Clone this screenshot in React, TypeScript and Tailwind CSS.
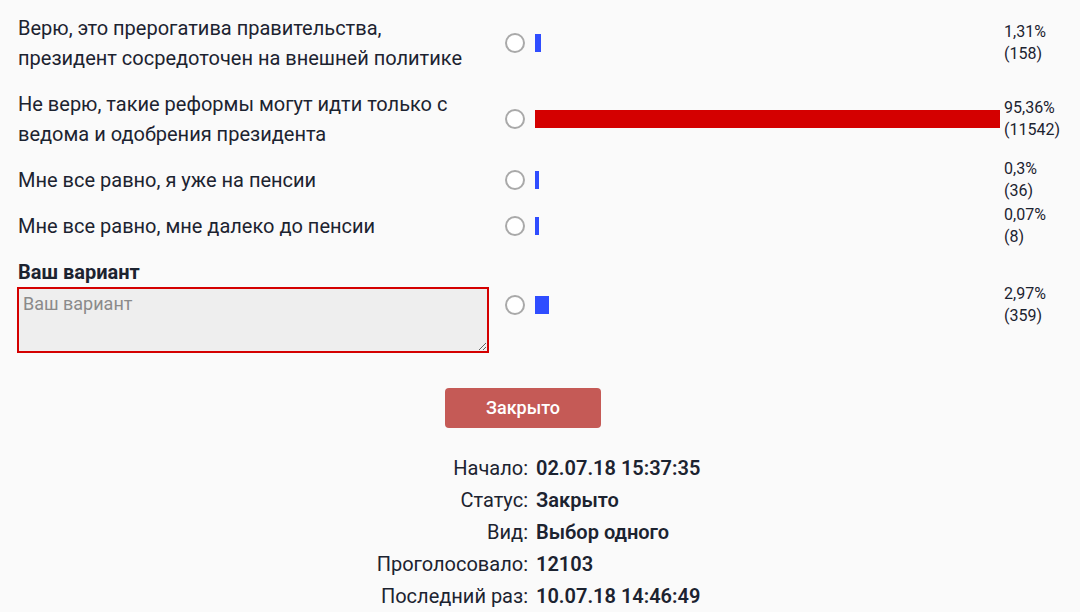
import React from "react";

type Row = { text: React.ReactNode; pct: string; count: string; bar: number; red?: boolean };

const rows: Row[] = [
  { text: <>Верю, это прерогатива правительства,<br />президент сосредоточен на внешней политике</>, pct: "1,31%", count: "(158)", bar: 6 },
  { text: <>Не верю, такие реформы могут идти только с<br />ведома и одобрения президента</>, pct: "95,36%", count: "(11542)", bar: 465, red: true },
  { text: "Мне все равно, я уже на пенсии", pct: "0,3%", count: "(36)", bar: 4 },
  { text: "Мне все равно, мне далеко до пенсии", pct: "0,07%", count: "(8)", bar: 4 },
];

function Radio() {
  return <div className="w-[20px] h-[20px] rounded-full border-2 border-[#a9a9a9] bg-white" />;
}

function Pct({ pct, count }: { pct: string; count: string }) {
  return (
    <div className="w-[76px] pl-[4px] text-[16px] leading-[22px] text-[#1c2330]">
      <div>{pct}</div>
      <div>{count}</div>
    </div>
  );
}

function Bar({ w, red }: { w: number; red?: boolean }) {
  return (
    <div className="w-[465px] flex">
      <div className={red ? "h-[18px] bg-[#d40000]" : "h-[18px] bg-[#2f4dff]"} style={{ width: w }} />
    </div>
  );
}

export default function App() {
  return (
    <div
      className="w-[1080px] h-[612px] bg-[#fafafa] text-[#1c2330] overflow-hidden"
      style={{ fontFamily: "Roboto, 'Noto Sans', sans-serif" }}
    >
      <div className="pl-[18px] pt-[4.5px]">
        {rows.map((r, i) => (
          <div key={i} className="flex items-center">
            <div className="w-[472px] py-[8px] text-[20px] leading-[30px]">{r.text}</div>
            <div className="w-[45px] flex justify-center pl-[4px]"><Radio /></div>
            <Bar w={r.bar} red={r.red} />
            <Pct pct={r.pct} count={r.count} />
          </div>
        ))}
        <div className="flex items-center">
          <div className="w-[472px] py-[8px]">
            <div className="text-[20px] leading-[30px] font-bold">Ваш вариант</div>
            <textarea
              placeholder="Ваш вариант"
              className="block w-[472px] h-[66px] -ml-[1px] bg-[#eeeeee] border-2 border-[#d40000] px-[4px] py-[2px] text-[18px] leading-[26px] placeholder:text-[#8a8a8a] outline-none"
              style={{ fontFamily: "Roboto, 'Noto Sans', sans-serif" }}
            />
          </div>
          <div className="w-[45px] flex justify-center pl-[4px]"><Radio /></div>
          <Bar w={14} />
          <Pct pct="2,97%" count="(359)" />
        </div>
        <div className="w-[1010px] flex justify-center mt-[27px]">
          <button className="w-[156px] h-[40px] rounded-[4px] bg-[#c55a56] text-white text-[18px] font-medium">Закрыто</button>
        </div>
        <div className="mt-[24px] text-[20px] leading-[32px]">
          {[
            ["Начало:", "02.07.18 15:37:35"],
            ["Статус:", "Закрыто"],
            ["Вид:", "Выбор одного"],
            ["Проголосовало:", "12103"],
            ["Последний раз:", "10.07.18 14:46:49"],
          ].map(([l, v]) => (
            <div key={l} className="flex gap-[8px]">
              <div className="w-[510px] text-right">{l}</div>
              <div className="font-semibold">{v}</div>
            </div>
          ))}
        </div>
      </div>
    </div>
  );
}
